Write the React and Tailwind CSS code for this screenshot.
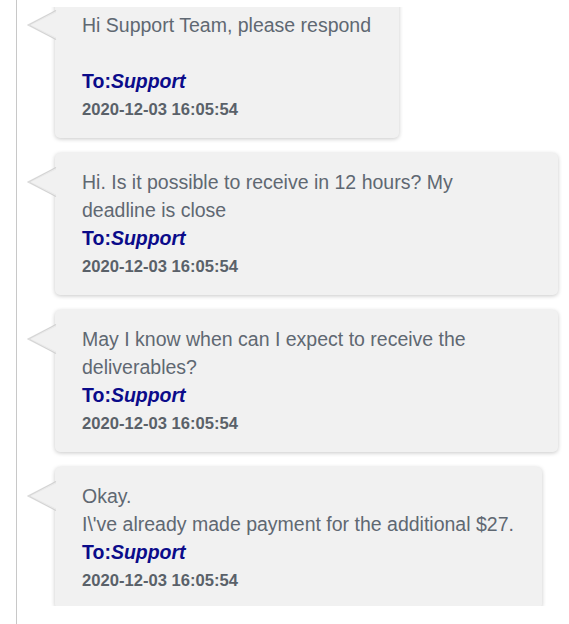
import React from "react";

const messages = [
  { lines: ["Hi Support Team, please respond", ""], date: "2020-12-03 16:05:54" },
  { lines: ["Hi. Is it possible to receive in 12 hours? My deadline is close"], date: "2020-12-03 16:05:54" },
  { lines: ["May I know when can I expect to receive the deliverables?"], date: "2020-12-03 16:05:54" },
  { lines: ["Okay.", "I\\'ve already made payment for the additional $27."], date: "2020-12-03 16:05:54" },
];

function Arrow() {
  return (
    <svg
      className="absolute left-[-28px] top-[14px]"
      width="31"
      height="31"
      viewBox="0 0 31 31"
    >
      <polygon points="29,0 1,15 29,30 31,30 31,0" fill="#f1f1f1" />
      <polyline points="29,0.5 1,15 29,29.5" fill="none" stroke="rgba(0,0,0,0.13)" strokeWidth="1.2" />
      <polyline points="29,2 3,15 29,28" fill="none" stroke="rgba(0,0,0,0.04)" strokeWidth="1" />
    </svg>
  );
}

function Bubble({ lines, date }) {
  return (
    <div className="relative w-fit max-w-[503px] rounded-[5px] bg-[#f1f1f1] pl-[27px] pr-[28px] pt-[15px] pb-[14px] shadow-[0_1px_4px_rgba(0,0,0,0.22)]">
      <Arrow />
      <div className="text-[19.5px] leading-[28px] text-[#5f6872]">
        {lines.map((l, i) =>
          l === "" ? <div key={i} className="h-[28px]" /> : <div key={i}>{l}</div>
        )}
      </div>
      <div className="text-[19.5px] leading-[28px] font-bold text-[#0b0b8a]">
        To:<span className="italic">Support</span>
      </div>
      <div className="text-[16.6px] leading-[29px] font-bold text-[#5a6169]">{date}</div>
    </div>
  );
}

export default function App() {
  return (
    <div
      className="h-[624px] w-[569px] bg-white"
      style={{ fontFamily: '"Liberation Sans", Arial, sans-serif' }}
    >
      <div className="ml-[16px] h-[624px] border-l border-[#c8c8c8] pt-[7px]">
        <div className="h-[599px] overflow-hidden">
          <div className="mt-[-11px] flex flex-col gap-[15px] pl-[38px]">
            {messages.map((m, i) => (
              <Bubble key={i} {...m} />
            ))}
          </div>
        </div>
      </div>
    </div>
  );
}
